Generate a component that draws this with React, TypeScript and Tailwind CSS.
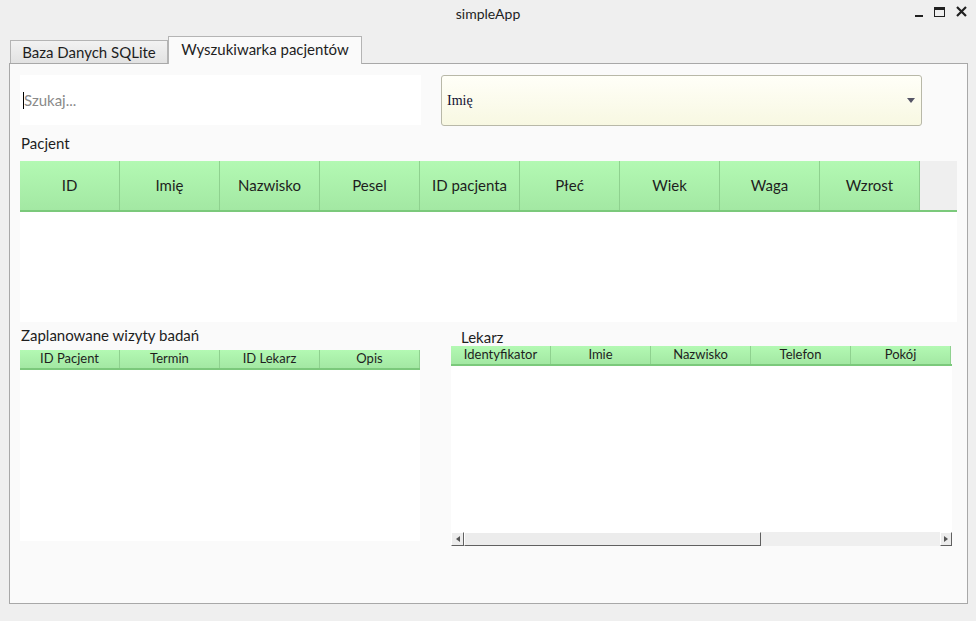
import React from "react";

const patientCols = ["ID", "Imię", "Nazwisko", "Pesel", "ID pacjenta", "Płeć", "Wiek", "Waga", "Wzrost"];
const visitCols = ["ID Pacjent", "Termin", "ID Lekarz", "Opis"];
const doctorCols = ["Identyfikator", "Imie", "Nazwisko", "Telefon", "Pokój"];

function HeaderCell({ label, h, size }: { label: string; h: string; size: string }) {
  return (
    <div
      className={`flex w-[100px] shrink-0 items-center justify-center border-r border-[#8fd18f] bg-gradient-to-b from-[#b3f9b3] to-[#a3e8a3] text-[#1e1e1e] ${h} ${size}`}
    >
      {label}
    </div>
  );
}

export default function App() {
  return (
    <div
      className="flex h-[621px] w-[976px] flex-col bg-[#efefef] text-[#1e1e1e]"
      style={{ fontFamily: "Lato, 'Noto Sans', sans-serif" }}
    >
      {/* title bar */}
      <div className="relative flex h-[26px] items-start justify-center pt-[3px] text-[14px]">
        simpleApp
        <div className="absolute right-[9px] top-[6px] flex items-center gap-[11px]">
          <div className="mt-[9px] h-[2px] w-[8px] bg-[#202020]" />
          <div className="h-[10px] w-[11px] border-[1.5px] border-t-[3px] border-[#202020]" />
          <svg width="11" height="11" viewBox="0 0 11 11">
            <path d="M1 1 L10 10 M10 1 L1 10" stroke="#202020" strokeWidth="2.2" />
          </svg>
        </div>
      </div>

      {/* tabs */}
      <div className="mt-[10px] flex items-end pl-[10px]">
        <div className="flex h-[23px] w-[158px] items-center justify-center border border-b-0 border-[#b4b4b4] bg-gradient-to-b from-[#f2f2f2] to-[#e2e2e2] text-[15px]">
          Baza Danych SQLite
        </div>
        <div className="relative -mb-px flex h-[28px] w-[194px] items-center justify-center border border-b-0 border-[#b4b4b4] bg-[#fafafa] pb-[2px] text-[15px]">
          Wyszukiwarka pacjentów
        </div>
      </div>

      {/* panel */}
      <div className="ml-[9px] flex h-[541px] w-[959px] flex-col border border-[#a8a8a8] bg-[#fafafa] pl-[10px] pt-[11px]">
        <div className="flex gap-[20px]">
          <div className="flex h-[50px] w-[401px] items-center bg-white pl-[3px] text-[15px] text-[#8a8a8a]">
            <div className="h-[17px] w-px bg-black" />
            Szukaj...
          </div>
          <div
            className="flex h-[51px] w-[481px] items-center justify-between rounded-[3px] border border-[#b8b8a8] bg-gradient-to-b from-[#fffff8] to-[#f8f8e2] pl-[5px] pr-[6px] text-[14px] text-[#101030]"
            style={{ fontFamily: "'Liberation Serif', 'DejaVu Serif', serif" }}
          >
            Imię
            <svg width="8" height="5" viewBox="0 0 8 5">
              <path d="M0 0 H8 L4 5 Z" fill="#555566" />
            </svg>
          </div>
        </div>

        <div className="mt-[6px] pl-px text-[15px]">Pacjent</div>
        <div className="mt-[6px] w-[937px]">
          <div className="flex border-b-2 border-[#7bc97b] bg-[#efefef]">
            {patientCols.map((c) => (
              <HeaderCell key={c} label={c} h="h-[49px]" size="text-[15px]" />
            ))}
          </div>
          <div className="h-[110px] bg-white" />
        </div>

        <div className="mt-[5px] flex">
          <div className="w-[400px]">
            <div className="pl-px text-[15px] leading-[16px]">Zaplanowane wizyty badań</div>
            <div className="mt-[7px] flex border-b-2 border-[#7bc97b]">
              {visitCols.map((c) => (
                <HeaderCell key={c} label={c} h="h-[18px]" size="text-[13px]" />
              ))}
            </div>
            <div className="h-[171px] bg-white" />
          </div>

          <div className="ml-[31px] w-[501px]">
            <div className="pl-[10px] pt-[2px] text-[15px] leading-[16px]">Lekarz</div>
            <div className="mt-[1px] flex border-b-2 border-[#7bc97b]">
              {doctorCols.map((c) => (
                <HeaderCell key={c} label={c} h="h-[18px]" size="text-[13px]" />
              ))}
            </div>
            <div className="h-[166px] bg-white" />
            {/* horizontal scrollbar */}
            <div className="flex h-[14px] bg-[#efefef]">
              <div className="flex w-[13px] items-center justify-center border border-b-[#606060] border-l-[#ffffff] border-r-[#606060] border-t-[#ffffff] bg-[#ececec]">
                <svg width="4" height="6" viewBox="0 0 4 6">
                  <path d="M4 0 V6 L0 3 Z" fill="#555" />
                </svg>
              </div>
              <div className="w-[297px] border border-b-[#606060] border-l-[#ffffff] border-r-[#606060] border-t-[#ffffff] bg-[#ececec]" />
              <div className="flex-1" />
              <div className="flex w-[12px] items-center justify-center border border-b-[#606060] border-l-[#ffffff] border-r-[#606060] border-t-[#ffffff] bg-[#ececec]">
                <svg width="4" height="6" viewBox="0 0 4 6">
                  <path d="M0 0 V6 L4 3 Z" fill="#555" />
                </svg>
              </div>
            </div>
          </div>
        </div>
      </div>
    </div>
  );
}
